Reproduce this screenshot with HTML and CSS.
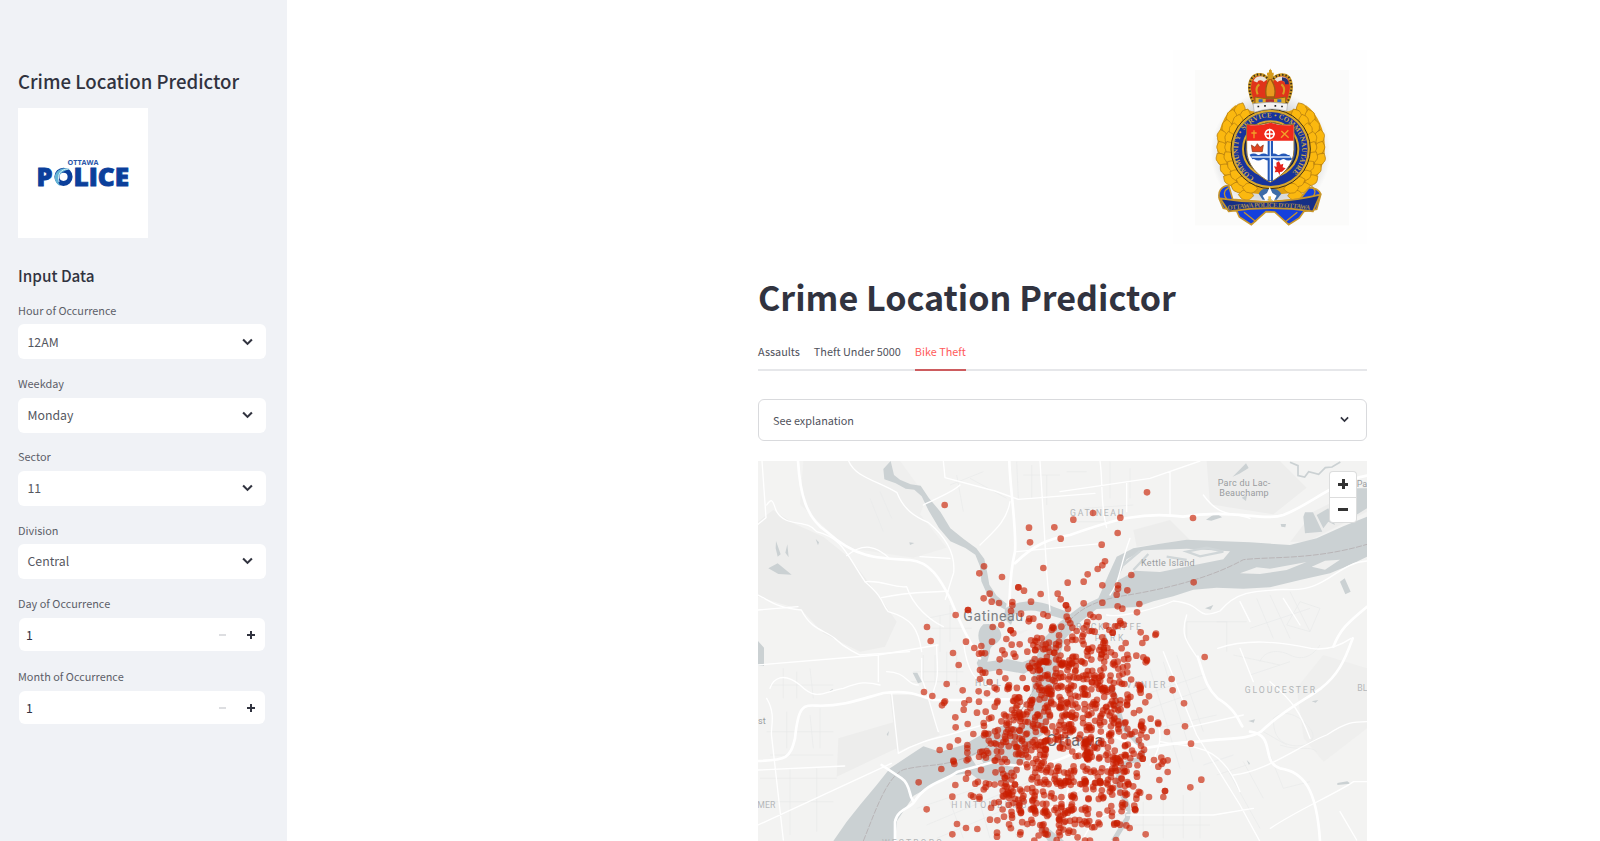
FILE: index.html
```html
<!DOCTYPE html>
<html lang="en">
<head>
<meta charset="utf-8">
<title>Crime Location Predictor</title>
<link rel="stylesheet" href="styles.css">
</head>
<body>
<div class="app">
  <aside class="sidebar">
    <h2 class="side-title">Crime Location Predictor</h2>
    <svg class="logo" viewBox="0 0 130 130" role="img" aria-label="Ottawa Police">
      <rect width="130" height="130" fill="#fff"/>
      <text x="49.500" y="57" textLength="31" lengthAdjust="spacingAndGlyphs" class="logo-small">OTTAWA</text>
      <text x="18.500" y="77.500" textLength="16" lengthAdjust="spacingAndGlyphs" class="logo-big">P</text>
      <text x="55.500" y="77.500" textLength="55.500" lengthAdjust="spacingAndGlyphs" class="logo-big">LICE</text>
      <circle cx="45.500" cy="68.800" r="6.600" fill="none" stroke="#0b3f9b" stroke-width="5"/>
      <path d="M52 61C43 58 35 64 37 72c1 3 3 5 5 6-4-8-1-14 10-17z" fill="#63b5d6"/>
      <path d="M50 61c-7 0-11 5-9 13" fill="none" stroke="#d4eef4" stroke-width="1"/>
    </svg>
    <h3 class="side-head">Input Data</h3>
    <div class="field"><label>Hour of Occurrence</label><div class="select"><span>12AM</span><svg class="chev" viewBox="0 0 10 7"><path d="M1 1.200 5 5.200 9 1.200"/></svg></div></div>
    <div class="field"><label>Weekday</label><div class="select"><span>Monday</span><svg class="chev" viewBox="0 0 10 7"><path d="M1 1.200 5 5.200 9 1.200"/></svg></div></div>
    <div class="field"><label>Sector</label><div class="select"><span>11</span><svg class="chev" viewBox="0 0 10 7"><path d="M1 1.200 5 5.200 9 1.200"/></svg></div></div>
    <div class="field"><label>Division</label><div class="select"><span>Central</span><svg class="chev" viewBox="0 0 10 7"><path d="M1 1.200 5 5.200 9 1.200"/></svg></div></div>
    <div class="field"><label>Day of Occurrence</label><div class="number"><span>1</span><i class="minus"></i><i class="plus"></i></div></div>
    <div class="field"><label>Month of Occurrence</label><div class="number"><span>1</span><i class="minus"></i><i class="plus"></i></div></div>
  </aside>
  <main class="main">
    <div class="column">
      <svg class="crest" viewBox="9 27 582 582" role="img" aria-label="Ottawa Police Service crest">
        <defs>
          <path id="arc" d="M253 409A96 96 0 1 1 350 407"/>
          <path id="leaf" d="M0-24C9-17 20-13 17 0 20 8 10 19 0 24-12 16-20 8-16-2-18-13-8-17 0-24z"/>
          <path id="rib" d="M173 507Q300 490 424 507"/>
          <radialGradient id="halo"><stop offset=".75" stop-color="#d9dadb"/><stop offset="1" stop-color="#fbfbfa"/></radialGradient>
        </defs>
        <rect x="9" y="27" width="582" height="582" fill="#fefefe"/>
        <rect x="75" y="87" width="462" height="466" fill="#fbfbfa"/>
        <ellipse cx="302" cy="335" rx="180" ry="185" fill="url(#halo)"/>
        <path d="M196 193C153 225 133 300 146 355c8 50 36 83 66 98l90 10 90-10c32-15 60-50 69-98 13-60-8-130-53-162l-52 18H246z" fill="#e0a010"/>
        <g fill="#fbb80f" stroke="#b57e10" stroke-width="2.500" id="leaves"></g>
        <circle cx="302" cy="324" r="119" fill="#d8a72c" stroke="#3b2e16" stroke-width="3"/>
        <circle cx="302" cy="324" r="111" fill="#16339c"/>
        <circle cx="302" cy="324" r="83" fill="#16223f" stroke="#d8a72c" stroke-width="6"/>
        <circle cx="302" cy="324" r="76" fill="#2447a0"/>
        <text class="arc-text"><textPath href="#arc" textLength="480">COMMUNITY • SERVICE • COMMUNAUTAIRE</textPath></text>
        <path d="M230 250q36 6 72-6 36 12 70 6v76c0 46-35 78-71 98-38-20-71-52-71-98z" fill="#fff" stroke="#8f7030" stroke-width="3"/>
        <path d="M231 251q36 6 71-6 35 12 69 6v48H231z" fill="#f02a1b"/>
        <path d="M301 300v120M243 348q8-5 15 0t15 0 15 0 15 0 15 0 15 0 15 0 14 0" fill="none" stroke="#2458b8" stroke-width="16"/>
        <path d="M301 300v118M244 348h118" stroke="#d8e8fb" stroke-width="4"/>
        <circle cx="299" cy="279" r="13" fill="none" stroke="#fff" stroke-width="5"/><path d="M299 263v32M283 279h32" stroke="#fff" stroke-width="4"/>
        <path d="M252 268v24M244 276h16M333 290l22-22M334 270l22 20" stroke="#f1a02a" stroke-width="4"/>
        <path d="M247 332l-3-20 11 7 7-11 8 11 10-7-3 20z" fill="#df4420" stroke="#8b3513" stroke-width="2"/>
        <path d="M327 361l5 10 8-3-2 11 9 3-11 10-6 1-1 10-5-10-10 1 3-8-5-10 8 1-1-12z" fill="#e5231b"/>
        <path d="M253 190C240 168 231 130 247 110c14-16 37-10 46 4l8-20 9 20c12-16 36-16 47-4 15 23 4 60-9 80z" fill="#e0341a" stroke="#c99722" stroke-width="9"/>
        <path d="M256 122c5-13 22-13 30-3M349 122c-4-12-22-13-31-3" stroke="#e9e3d8" stroke-width="12" fill="none"/>
        <path d="M336 114q15 0 15 16" stroke="#28336f" stroke-width="11" fill="none"/>
        <path d="M268 130q-14 10-5 30M334 130q14 10 5 30" stroke="#d99c22" stroke-width="6" fill="none"/>
        <path d="M300 112c-13 18-15 36-11 56h24c5-19 3-37-13-56z" fill="#e89a1f" stroke="#9d5c12" stroke-width="4"/>
        <path d="M253 190C240 168 231 130 247 110c14-16 37-10 46 4M310 114c12-16 36-16 47-4 15 23 4 60-9 80" stroke="#3b2a18" stroke-width="6" fill="none" stroke-dasharray="4 6"/>
        <path d="M301 87v27M291 99h20" stroke="#d69a1a" stroke-width="8"/>
        <path d="M255 168q45 10 92 0v21q-46-9-92 0z" fill="#e0ad28" stroke="#8d651b" stroke-width="3"/>
        <path d="M266 179h12M322 179h12" stroke="#3566bd" stroke-width="9"/><path d="M287 179h25" stroke="#b3302c" stroke-width="9"/>
        <path d="M249 188q53-9 104 0l-3 22q-48-14-97 4z" fill="#f4f2f1" stroke="#aaa" stroke-width="2"/>
        <path d="M265 194v5M285 192v5M316 192v5M336 194v5" stroke="#222" stroke-width="5"/>
        <path d="M176 433C153 436 143 452 148 474l12 28 40 8 8 18 36 23 44-39 26 1 42 38 32-20 14-20 38-6 12-44c-3-14-19-22-36-20l-27 34-101 8-100-8z" fill="#1440dc" stroke="#c8962a" stroke-width="5"/>
        <path d="M150 472q150 26 301-11l-22 50q-125-19-253 0z" fill="#162f86" stroke="#c8962a" stroke-width="5"/>
        <path d="M176 440q-22 14-6 34M424 436q18 12 6 30" fill="none" stroke="#c8962a" stroke-width="4"/>
        <path d="M222 514l36 28M382 514l-36 28" stroke="#c8962a" stroke-width="4"/>
        <text class="ribbon-text"><textPath href="#rib" textLength="248">OTTAWA POLICE D'OTTAWA</textPath></text>
        <path d="M266 458q10-18 24-14h18q16-2 26 14l-14 18h-42z" fill="#3d6ca7"/>
        <path d="M299 438l8 18 13 8-9 16-12-8-12 8-9-16 13-8z" fill="#fff"/>
        <path d="M295 466h8v14h-8z" fill="#e8c24b"/>
      </svg>
      <h1 class="title">Crime Location Predictor</h1>
      <nav class="tabs"><a>Assaults</a><a>Theft Under 5000</a><a class="on">Bike Theft</a></nav>
      <div class="expander"><span>See explanation</span><svg class="chev" viewBox="0 0 10 7"><path d="M1 1.200 5 5.200 9 1.200"/></svg></div>
      <div class="map">
        <svg class="map-svg" viewBox="24 18 1827 1140">
          <rect x="24" y="18" width="1827" height="1140" fill="#f3f3f2"/>
          <g fill="#ededec">
            <path d="M24 200L70 165 130 205 220 245 300 310 385 420 440 500 405 575 330 590 220 535 155 465 24 425z"/>
            <path d="M160 18h290l80 110-20 50 80 100-100 30-200-30-140-130z" fill="#efefee"/>
            <path d="M420 720l110 0 40 120-130 50zM265 850l170-50 5 80-180 85z"/>
            <path d="M1370 18h220l80 80-100 80-190-30zM1150 225l110-30 60 60-160 20zM1690 170l161-80v80l-180 90h-50z"/>
            <path d="M1640 700l80-100 131 40v180l-130 100-60-70z" fill="#efefee"/>
          </g>
          <g fill="none" stroke="#e9eaea" stroke-width="2">
            <path d="M360 130l40 100M390 110l35 80M620 60l20 110M660 70l110 60M800 20l5 110M845 30v100M890 60v90M600 90l100-40M820 60h110M950 50h60M1080 20v110M1140 40v90M1000 160l150-10M980 200h130M570 480v110M600 450v110M545 520h120M530 490l100-20"/>
            <path d="M100 640v90M140 650v80M180 640l10 90M60 690h190M110 770v110M180 780l10 100M210 760v120M50 830h200M60 900h190M120 940v200M200 940v190M30 970h230M30 1040h220"/>
            <path d="M520 600v100M555 600v100M590 590v110M620 600v90M490 650h150M480 680h150M500 1060l300-100M530 1110l310-130M560 1150l260-110M600 1040l40 110M680 1010l40 140M760 980l40 170"/>
            <path d="M1200 640l90 300M1240 620l90 300M1280 600l80 230M1180 720l180-60M1200 760l170-60M1220 820l180-40M1310 560v-60h120v90M1400 500h90M1520 430l50 120M1560 420l60 130M1620 410l60 120M1500 520l180-60M1650 440l60 20-30 70-70-20z"/>
            <path d="M1100 1080h280M1120 1110h260M1180 1040v100M1240 1030v120M1300 1020v130M1350 1010v140M1430 940l100 180M1480 920l60 110M1540 830l70 40M1560 900l40 100 80-20M1360 930l90-30M1400 960l90-30M1450 600l140 30M1500 660l120-40"/>
            <path d="M1570 790c30-30 80-10 110 30s-20 60-60 50-50-40-50-80zM1590 870c60 20 90 0 110 20M1530 620c10-30 50-40 90-20s70 0 90-30"/>
          </g>
          <g fill="#cbd1d3">
            <path d="M400 42l22-24 10 42 18 14 32 14 30 4 25 38 34 40 30 50 40 32 38 28 24 32 9 42 6 35 22 33 30 24-4 18-24-13-30-32-18-40-4-45-14-35-30-20-45-20-34-40-30-50-22-45-22-20-26-3-30-16-34-12z"/>
            <path d="M765 460c40-26 100-26 145-5l50 18-10 22-50-14c-40-20-75-18-105-4l-12 33-20-20z"/>
            <path d="M700 508q48-8 54 32c-2 30-35 25-34 50l-8 30 60-8 45 10 50-20 15 20-60 34-70-12-60 10-12-30 20-38q-30-50 0-78z"/>
            <path d="M930 500l60-45 55-25 30-70 25-55 50-25 80-14 80-12 90 4 100 4 120 8 80-20 80-36 71-29v120l-51 25-60 25-90 20-90 22-80 4-80-3-70 6-60 20-60 15-50 17-120 6-50 40-45 50-25 80-10 90-20 110-80 50-30-10 60-100 10-120 20-90z"/>
            <path d="M840 820l-80-10-60 26-60 34-70 20-50-16-40 26-60 40-40 50-50 60-40 50-40 58h185l6-60 50-76 50-28 60-32 58-8 25 18 90 12 40-50 30-60z"/>
            <path d="M865 1115l30 5 50 40h-50z"/>
            <path d="M55 340l28-15 42 34-40-2zM78 258l14 40-9 7-6-25zM112 268l-6 25 10 14M197 252l10 10-3 9zM478 262l15 2-13 6zM24 558l18 20v55H24zM488 653l14 0 14 28-12 4zM410 838l7-10-3 16zM238 708l10-7v5z"/>
            <path d="M1448 65l40-40 8 14-28 17zM1368 194l30-20 18 13-32 10zM1665 172l24 0 28 58-52 5-5-50zM1700 180l35-20 20 50-20-10-15 20zM1770 380l14-10 18 40-16 8zM1815 100h36v60l-36 22zM1475 128l16-8-3 18zM1592 207h16l-2 10-12-2zM1365 460l25-10-8 14zM1495 798l20-5-4 10zM1685 739l20-4-8 8zM1762 984l30-5 10 7-40 4zM1490 915l10 10-3 5zM1430 540l30 7zM1255 610l4 6zM1300 600l8 10z"/>
          </g>
          <path d="M1620 22l24 10 0 30 20 4 12-16 30 8 20-20 20-2 25-15" fill="none" stroke="#cbd1d3" stroke-width="5"/>
          <path d="M1080 690c30 50 20 110 55 145 35 30 60 58 30 80-55 0-62 40-62 75 12 40 40 50 29 100-20 30-30 50-42 68" fill="none" stroke="#cbd1d3" stroke-width="15"/>
          <g fill="#f0f0ef">
            <path d="M1100 378l30-65 50-27 130-5 130 8-20 24-90 18-100 20-75-4-33 20z"/>
            <path d="M1470 355l50-18 40 4 110-20-60 24-80 12zM1685 335l40-18 45-3-45 30z"/>
            <path d="M662 905l20-8 18 26-22 8zM800 530l40-8-30 16z"/>
          </g>
          <path d="M1120 330l50-42M1150 345l45-48M1310 290l60-12 50 12-70 14zM1250 305l60 10" stroke="#d0d6d8" stroke-width="7" fill="none"/>
          <path d="M340 1158c40-100 70-190 120-214 70-18 120-6 200-42 110-40 200-190 250-330 40-90 100-130 200-148 130-20 270-54 370-110 80-10 210 2 371-46" fill="none" stroke="#b9b5b7" stroke-width="3" stroke-dasharray="18 4"/>
          <g fill="none" stroke="#fff" stroke-linecap="round" stroke-linejoin="round">
            <g stroke-width="8">
              <path d="M144 18C150 120 170 190 230 230 320 310 380 310 480 315 540 320 570 370 600 430 630 500 645 540 690 610"/>
              <path d="M778 18C780 100 800 220 795 290 780 350 780 400 778 450M795 325C850 270 900 250 960 240 1100 190 1180 170 1300 185 1440 160 1540 200 1600 180 1680 150 1750 80 1851 62"/>
              <path d="M24 918C110 915 120 910 135 850 145 750 160 750 200 752 280 755 340 730 400 714 480 705 500 720 550 735 620 735 700 735 790 732"/>
              <path d="M395 930l60 40c30 20 20 60 38 70-10 20-50 20-58 60l0 58M493 1040c40-60 90-60 130-90l110-30c140 40 250-20 330-90l110 50c50-5 110-20 170-20 90-12 150-5 190-30 60-60 140-100 180-130 50-40 70-80 95-150"/>
              <path d="M1500 830c80 10 30 90 90 110 70 10 110 60 120 218M1343 605c20 60 24 90 60 125 50 30 60 60 74 84M1750 575c20-50 40-70 101-120"/>
            </g>
            <g stroke-width="4">
              <path d="M296 18c20 50 90 60 145 95 20 50 50 70 95 90 60 50 80 100 75 150-10 30-15 50-25 80M36 18l12 170-24 20M50 150c20-30 20 0 30 20 30 50 90 20 120 60 80 20 90 70 145 150 60 50 50 70 70 90 70 20 90 50 100 120"/>
              <path d="M24 420c40 20 60 40 130 45 30 60 70 60 100 85 30 30 40 30 75 50l150-10M345 380c60-5 80 20 125 15 20 60 70 100 110 120M395 428c80-18 140-15 200-20M24 465l120-10M290 302c50-40 90-30 130 10"/>
              <path d="M520 150c60-30 90-40 110-60M580 18l5 50 150 40 70 25 230-18M870 18l20 330 10 120M690 270c40-40 80-70 90-130M600 310l-90-5M800 290l260-25"/>
              <path d="M24 630l360-30 180-30M60 700c10-30 40-50 90-10 50 50 70 20 130 10 50-20 70-20 110-10M385 600v80M410 650c60 0 60 40 95 40M425 715l20 180c50-30 90-40 150-55l120-35M65 845l35 310M50 730c30 50 10 90 15 115M24 945l260-12M24 1110l400-185"/>
              <path d="M515 610v60c20 50 30 100 50 160M560 570c0 60 10 90-10 140M640 560c10 80 30 130 100 140"/>
              <path d="M1070 480c40 10 150-20 200-42 100 10 60 60 140 30 50-60 100-60 200-65 120 10 150-80 241-85M1310 480c-20 60 0 80 30 125M1403 580c90-30 180-20 280 0 50 8 90-10 120-30"/>
              <path d="M1240 590l100 250 130 210 60 110M1300 820l180-40M1450 960c100-10 200-90 280-120 60-40 80-40 121-40M1560 680c70 60 90 90 120 170M1230 860c100 20 180 0 240 150M1130 1080h260l120-20M1851 980h-40c-60 40-160 80-250 140M1770 1070l50 85M1140 250c-30 80-30 130-60 170M1050 18c10 70 0 130 20 200M930 110l270-40 150-52M1260 50v130M1130 80v90M1360 120c50 70 90 50 140 70"/>
              <path d="M1500 500l-30-60M1600 430l50 80M1470 580l40 100M1200 930c40-60 40-120 0-150M880 1070c120-60 190-130 220-160M920 1158l40-180M1000 1150c40-80 70-70 130-80"/>
            </g>
          </g>
          <g class="place">
            <text x="1403" y="93" textLength="158">Parc du Lac-</text><text x="1408" y="124" textLength="148">Beauchamp</text>
            <text x="1820" y="97">Pa</text><text x="1173" y="334" textLength="161">Kettle Island</text>
            <text x="24" y="807">st</text>
          </g>
          <g class="area">
            <text x="960" y="184" textLength="160">GATINEAU</text><text x="978" y="526" textLength="195">ROCKCLIFFE</text><text x="1034" y="558" textLength="86">PARK</text>
            <text x="1128" y="698" textLength="118">VANIER</text><text x="1484" y="713" textLength="211">GLOUCESTER</text><text x="1822" y="709">BL</text>
            <text x="604" y="1059" textLength="225">HINTONBURG</text><text x="22" y="1059" textLength="54">MER</text><text x="675" y="692" textLength="78">HULL</text>
            <text x="396" y="1173" textLength="180">WESTBORO</text>
          </g>
          <text x="640" y="497" textLength="179" class="city">Gatineau</text>
          <text x="888" y="873" textLength="172" class="city big">Ottawa</text>
          <g id="dots" fill="#c91d00" fill-opacity=".64"></g>
        </svg>
        <div class="zoomer"><b class="zin"></b><b class="zout"></b></div>
      </div>
    </div>
  </main>
</div>
<script src="app.js"></script>
</body>
</html>
```
FILE: styles.css
```css
* { box-sizing: border-box; }
body { margin: 0; height: 841px; overflow: hidden; background: #fff; color: #31333f; font-family: "Noto Sans CJK SC", "Open Sans", sans-serif; }
.app { display: flex; height: 841px; }
.sidebar { width: 287px; height: 841px; background: #f0f2f6; padding: 67px 21px 0 18px; flex: none; }
.side-title { margin: 0 0 12.600px; font-size: 18.600px; line-height: 28px; font-weight: 500; white-space: nowrap; }
.logo { display: block; width: 130px; height: 130px; }
.logo-small { font: 700 7px "Open Sans", sans-serif; fill: #2a56a8; }
.logo-big { font: 800 24px "Open Sans", sans-serif; fill: #0b3f9b; stroke: #0b3f9b; stroke-width: .8px; }
.side-head { margin: 25.400px 0 14px; font-size: 15.300px; line-height: 24px; font-weight: 500; }
.field { height: 73.200px; }
.field label { display: block; font-size: 10.900px; line-height: 18px; height: 23.400px; color: #5c5e68; }
.select { height: 35px; border-radius: 6px; background: #fff; display: flex; align-items: center; justify-content: space-between; padding: 0 13px 0 9.500px; font-size: 12.300px; color: #555761; }
.chev { width: 11px; height: 8px; fill: none; stroke: #31333f; stroke-width: 1.900; }
.number { height: 33px; margin: 1px 1px 0; border-radius: 6px; background: #fff; display: flex; align-items: center; padding: 0 10px 0 7px; font-size: 12.300px; }
.number span { flex: 1; }
.minus { width: 7px; height: 2px; background: #dddee1; margin-right: 21px; }
.plus { width: 8px; height: 8px; background: linear-gradient(#31333f, #31333f) center / 8px 2px no-repeat, linear-gradient(#31333f, #31333f) center / 2px 8px no-repeat; }
.main { flex: 1; padding: 50px 0 0 471px; }
.column { width: 609px; display: flex; flex-direction: column; }
.crest { width: 194px; height: 194px; align-self: flex-end; }
.arc-text { font: 700 21px "Liberation Serif", serif; fill: #cda94b; }
.ribbon-text { font: 700 20px "Liberation Serif", serif; fill: #a88c50; }
.title { margin: 27px 0 0; font-size: 34.100px; line-height: 50px; font-weight: 700; white-space: nowrap; }
.tabs { display: flex; gap: 14px; height: 50px; border-bottom: 2px solid #e6e7ea; font-size: 10.850px; line-height: 18px; padding-top: 21px; color: #50525b; }
.tabs a { height: 29px; white-space: nowrap; }
.tabs .on { color: #ff5a5a; border-bottom: 2px solid #cd5c5f; }
.expander { margin-top: 28px; height: 42px; border: 1px solid #d9dadd; border-radius: 6px; display: flex; align-items: center; justify-content: space-between; padding: 0 17px 1px 14px; font-size: 10.850px; color: #50525b; }
.expander .chev { width: 9px; height: 7px; }
.map { margin-top: 20px; height: 380px; position: relative; }
.map-svg { display: block; width: 609px; height: 380px; }
.place { font: 400 27px Roboto, sans-serif; fill: #999c9e; }
.area { font: 400 26px Roboto, sans-serif; fill: #b4b7b9; }
.city { font: 400 42px Roboto, sans-serif; fill: #7c8084; }
.city.big { font-size: 50px; fill: #6d6f72; }
.zoomer { position: absolute; top: 11px; right: 11px; width: 26px; height: 50px; background: #fff; border-radius: 3px; box-shadow: 0 0 0 1px #dcdddd; display: flex; flex-direction: column; }
.zoomer b { flex: 1; background: linear-gradient(#333, #333) center / 10px 3px no-repeat; }
.zoomer .zin { border-bottom: 1px solid #ddd; background: linear-gradient(#333, #333) center / 10px 3px no-repeat, linear-gradient(#333, #333) center / 3px 10px no-repeat; }
```
FILE: app.js
```js
const NS = 'http://www.w3.org/2000/svg';
const OX = 450, OY = 315;

// Individually located incidents, x,y pairs
const points = `134,-165 387,-97 463,-98 390,-53 482,-64 741,-203 579,-141 520,-121 661,-127 879,-126 653,-81 605,-46
252,19 238,40 306,51 430,24 615,4 607,16 593,27 563,43 551,65 503,68 694,45 881,67 607,76 654,76 654,86 682,91 650,104
355,82 355,82 372,92 269,101 251,115 275,125 297,129 337,126 337,136 422,102 473,101 482,118 393,125 498,136 498,136 504,147
551,130 607,128 653,139 667,146 718,132 711,157 167,165 204,150 204,150 333,153 363,161 81,201 92,243 278,201 304,195
332,211 332,211 340,220 276,245 198,245 223,264 244,258 159,279 237,281 245,279 255,280 176,315 319,237 335,254 359,253
382,275 307,271 314,283 341,281 346,290 299,298 388,176 400,176 386,184 430,163 443,168 419,199 459,200 457,203 461,205
484,200 455,210 500,170 505,180 511,190 517,203 530,213 517,230 517,240 571,164 580,171 596,171 562,186 560,196 551,205
568,213 576,213 584,215 550,223 618,197 628,210 638,218 638,218 660,183 662,190 671,194 645,199 653,198 722,217 738,234
727,249 768,221 766,225 677,249 613,243 615,248 611,264 551,253 577,263 709,287 685,296 672,298 653,305 730,292 740,299
737,307 741,302 404,297 386,318 390,325 240,330 248,338 256,338 298,336 316,355 368,354 240,357 269,366 140,372 188,391
236,394 261,400 284,383 290,388 327,375 324,380 380,385 380,385 72,396 97,408 126,436 135,424 132,428 193,430 207,420
191,449 237,425 284,440 231,458 257,455 166,472 167,502 203,492 220,522 251,489 252,498 174,541 149,560 119,570 124,627
160,602 163,612 161,605 202,555 202,565 202,578 205,597 200,601 56,667 80,748 204,639 198,656 166,675 157,710 213,706
220,710 226,671 171,792 198,804 157,823 232,807 270,779 292,781 312,770 291,818 291,830 815,357 818,391 852,430 855,499
873,551 871,682 747,711 795,693 795,693 790,711 762,600 784,593 790,604 803,601 775,620 785,612 803,636 778,660 801,516
774,488 775,492 752,476 726,485 730,504 755,513 740,532 718,451 736,427 747,409 722,386 722,398 720,377 732,569 728,596
728,596 687,615 710,640 711,650 710,705 709,716 705,748 705,748 660,794 689,804 737,823 648,840 675,733 668,741 914,291
904,659 345,412 350,418 342,424 360,425 500,465 515,470 528,465 525,475 345,465 360,470 330,520 345,530 405,560 420,570
412,262 400,255 410,245 425,235 406,270 430,268 324,698 318,703 328,706 323,695 655,598 660,603 650,606 640,610 570,580
562,575 575,590 495,760 503,758 490,764 505,818 508,812 470,840 555,842 570,842 403,842`.trim().split(/\s+/).map(p => p.split(',').map(Number));

// Incident counts per 40-unit cell across the centre, first cell at (240, 230)
const cells = [
  '000053221200', '000045554320', '000256643440', '000065455542', '004257545632',
  '025544645541', '134455555453', '335554424326', '434573557434', '132283434472',
  '324148734640', '245344433642', '226473340231', '003134532230', '002233413000'
];
const clearings = [[466, 585, 24], [652, 551, 19], [543, 505, 16], [360, 660, 18]];
let seed = 71;
const rnd = () => (seed = (seed * 16807) % 2147483647) / 2147483647;
cells.forEach((row, r) => [...row].forEach((n, c) => {
  for (let i = 0; i < +n * 1.35; i++) {
    const x = 233 + c * 40 + rnd() * 54, y = 223 + r * 40 + rnd() * 54;
    if (clearings.every(([a, b, d]) => Math.hypot(x - a, y - b) > d)) points.push([x, y]);
  }
}));
const dots = document.getElementById('dots');
for (const [x, y] of points) {
  const dot = document.createElementNS(NS, 'circle');
  dot.setAttribute('cx', x + OX);
  dot.setAttribute('cy', y + OY);
  dot.setAttribute('r', 10);
  dots.appendChild(dot);
}

// Laurel leaves down both sides of the crest
const leaves = document.getElementById('leaves');
for (const side of [-1, 1]) {
  for (let ring = 0; ring < 2; ring++) {
    for (let i = 0; i < 10; i++) {
      const a = -0.88 + i * 0.215;
      const radius = 146 - ring * 24 + (i % 2) * 4;
      const x = 302 + side * Math.cos(a) * radius, y = 325 + Math.sin(a) * (radius + 8);
      const leaf = document.createElementNS(NS, 'use');
      leaf.setAttribute('href', '#leaf');
      leaf.setAttribute('transform', `translate(${x} ${y}) rotate(${side * (a * 57 + 25)}) scale(.85 .95)`);
      leaves.appendChild(leaf);
    }
  }
}
```
